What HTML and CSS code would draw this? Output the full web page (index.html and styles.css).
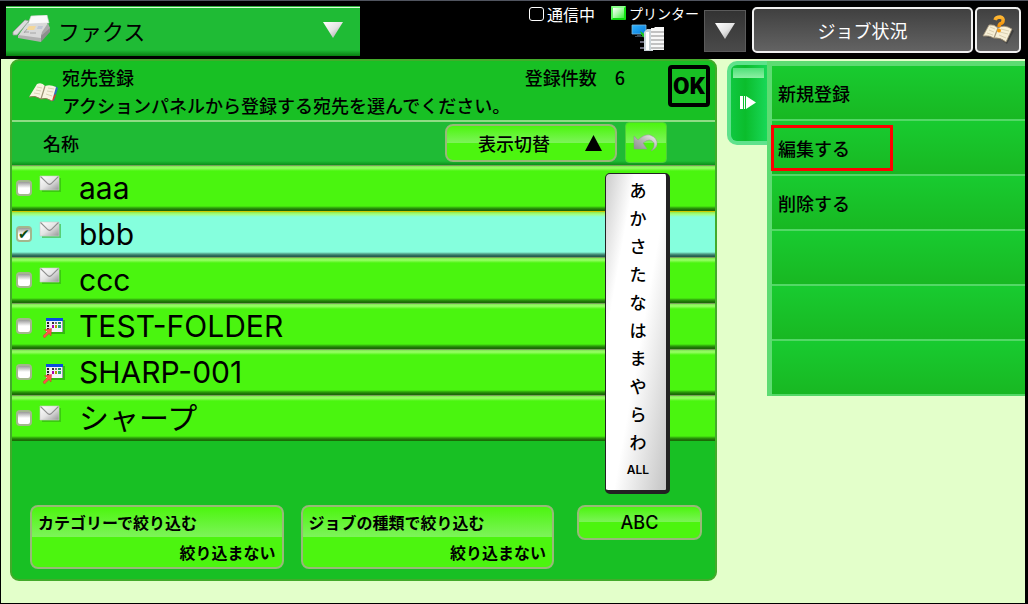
FILE: index.html
```html
<!DOCTYPE html>
<html lang="ja">
<head>
  <meta charset="UTF-8">
  <meta name="viewport" content="width=device-width, initial-scale=1">
  <title>宛先登録</title>
  <link rel="stylesheet" href="styles.css">
</head>
<body>

<!-- Shared icons -->
<svg class="defs" width="0" height="0" aria-hidden="true">
  <defs>
    <linearGradient id="silver" x1="0" y1="0" x2="1" y2="1">
      <stop offset="0" stop-color="#fff"/>
      <stop offset="0.5" stop-color="#e4e4e4"/>
      <stop offset="1" stop-color="#969696"/>
    </linearGradient>
    <linearGradient id="steel" x1="0" y1="1" x2="1" y2="0">
      <stop offset="0" stop-color="#8a8a8a"/>
      <stop offset="0.5" stop-color="#b4b4b4"/>
      <stop offset="1" stop-color="#f4f4f4"/>
    </linearGradient>
    <linearGradient id="screen" x1="0" y1="0" x2="1" y2="1">
      <stop offset="0" stop-color="#2fb4ff"/>
      <stop offset="1" stop-color="#0878d8"/>
    </linearGradient>
    <linearGradient id="amber" x1="0" y1="0" x2="0" y2="1">
      <stop offset="0" stop-color="#ffb733"/>
      <stop offset="1" stop-color="#f08a00"/>
    </linearGradient>
  </defs>
  <symbol id="mail" viewBox="0 0 26 20">
    <path d="M3 3h19v14H3z" fill="#2aa010" opacity="0.5"/>
    <path d="M1 1h19v14H1z" fill="url(#silver)" stroke="#c9c9c9" stroke-width="0.6"/>
    <path d="M1.5 1.5 9 8.8q1.500 1.200 3 0L19.500 1.500" fill="none" stroke="#8e8e8e" stroke-width="1.100"/>
  </symbol>
  <symbol id="folder" viewBox="0 0 24 24">
    <path d="M6 4h17v14H6z" fill="#1f8a10" opacity="0.55"/>
    <path d="M4 2h17v14H4z" fill="#f4f4fa"/>
    <path d="M4 2h17v3H4z" fill="#0a4be0"/>
    <path d="M4 5h4v11H4z" fill="#e8e8e8"/>
    <path d="M20 5h1v11h-1z" fill="#9a9ab0"/>
    <path d="M5 6h2v2H5zM5 9h2v2H5zM5 12h2v2H5z" fill="#222"/>
    <path d="M10 6h2v2h-2z" fill="#333"/>
    <path d="M13 6h2v2h-2z" fill="#777"/>
    <path d="M16 6h3v2h-3z" fill="#189060"/>
    <path d="M10 9h2v3h-2z" fill="#b000b0"/>
    <path d="M13 9h2v3h-2z" fill="#a8a800"/>
    <path d="M16 9h3v3h-3z" fill="#28a878"/>
    <path d="M1 20 5.500 15.500 2.500 13.800 9.500 12.500 9 20 7 17.500 2.500 22z" fill="#ff5548" stroke="#c93a30" stroke-width="0.5"/>
  </symbol>
</svg>

<!-- Top bar -->
<header class="topbar">
  <button class="mode" type="button">
    <svg width="40" height="30" viewBox="0 0 40 30" aria-hidden="true">
      <path d="M15 8 35 8 38 15 29 25 6 21z" fill="#d9d9d9"/>
      <path d="M19 1 35 0 37 8 16 9z" fill="#fafafa" stroke="#d2d2d2" stroke-width="0.6"/>
      <path d="M29 20 38 12V17L29 27z" fill="#8e8e8e"/>
      <path d="M36 8 38 13 29 21 30 17z" fill="#a9a9a9"/>
      <path d="M6 20 29 23V27L6 23z" fill="#b1b1b1"/>
      <path d="M13 5 17 6 5 20 1 20V17z" fill="#dcdcdc" stroke="#9a9a9a" stroke-width="0.8"/>
      <path d="M17 11h7l-2 4h-8z" fill="#f3d79b"/>
      <path d="M26 11h5l-1 3h-5z" fill="#c0c6d4"/>
      <path d="M12 17h5M18 18h6M15 14l-3 4" stroke="#a6a6a6" stroke-width="1" fill="none"/>
    </svg>
    <span>ファクス</span>
    <svg class="arrow" width="20" height="16" viewBox="0 0 20 16" aria-hidden="true"><path d="M0 0h20L10 16z" fill="url(#silver)"/></svg>
  </button>

  <div class="status">
    <div class="state"><span class="lamp"></span>通信中</div>
    <div class="printer">
      <div class="printer-name"><span class="lamp on"></span>プリンター</div>
      <svg width="34" height="28" viewBox="0 0 34 28" aria-hidden="true">
        <path d="M1 1h14v9H1z" fill="url(#screen)" stroke="#7fb9dc" stroke-width="0.8"/>
        <path d="M6 10h4v2H6zM4 12h9v1H4z" fill="#3c4a54"/>
        <path d="M9 7l6 4 1 5-5-4z" fill="#18c81c"/>
        <path d="M9 18h5v-2M9 24h5" stroke="#667" stroke-width="2" fill="none"/>
        <path d="M13 8l3-3h6v22h-9z" fill="#c9d3d8"/>
        <path d="M15 8h3v18h-3z" fill="#fff"/>
        <path d="M20 4h3l1-1h9v23H20z" fill="#f8f8f8"/>
        <path d="M20 8h13M20 12h13M20 16h13M20 20h13M20 24h13" stroke="#8b8b8b" stroke-width="1"/>
      </svg>
    </div>
  </div>

  <button class="drop" type="button" aria-label="メニュー">
    <svg width="20" height="16" viewBox="0 0 20 16" aria-hidden="true"><path d="M0 0h20L10 16z" fill="url(#silver)"/></svg>
  </button>
  <button class="job" type="button">ジョブ状況</button>
  <button class="help" type="button" aria-label="ヘルプ">
    <svg width="32" height="30" viewBox="0 0 32 30" aria-hidden="true">
      <path d="M4 23Q12 21 18 24L25 29 32 16 28 12z" fill="#2c2c2c" opacity="0.5"/>
      <path d="M7 10Q12 9 16 13Q22 9 30 14L24 27Q18 22 12 23Q7 20 1 21z" fill="#f7efd6" stroke="#a4957a" stroke-width="0.8"/>
      <path d="M16 13 12 23" stroke="#a4957a" stroke-width="1.200"/>
      <path d="M8 12l5 2M7 15l5 2M5 18l6 2M19 14l8 2M18 17l8 2M17 20l7 3" stroke="#d2c6a6" stroke-width="0.8"/>
      <path d="M13 5Q14 2 18 2Q22 3 21 6Q21 8 18 9Q17 10 17 12" fill="none" stroke="url(#amber)" stroke-width="3.500"/>
      <circle cx="17" cy="15.500" r="2" fill="#f59a10"/>
    </svg>
  </button>
</header>

<main class="screen">
  <!-- Address list -->
  <section class="panel">
    <div class="panel-head">
      <svg class="book" width="32" height="24" viewBox="0 0 32 24" aria-hidden="true">
        <path d="M27 5l3 2-4 13-3-1z" fill="#2d6fb8"/>
        <path d="M27 13l1 1-3 6-2-1z" fill="#d8431f"/>
        <path d="M9 3Q14 1 17 5Q22 3 28 6L24 20Q18 16 13 18Q7 14 1 16z" fill="#f8f3e0"/>
        <path d="M17 5 13 18" stroke="#9c9474" stroke-width="1.200"/>
        <path d="M9 6l5 1M8 9l5 1M6 12l6 1M20 7l6 1M19 10l6 1M18 13l6 2" stroke="#d3cba9" stroke-width="0.8"/>
        <path d="M1 16Q7 14 13 18Q18 16 24 20" fill="none" stroke="#8d7d50" stroke-width="1"/>
      </svg>
      <div class="panel-text">
        <div class="panel-title">
          <h1>宛先登録</h1>
          <span>登録件数　6</span>
        </div>
        <p>アクションパネルから登録する宛先を選んでください。</p>
      </div>
      <button class="ok" type="button">OK</button>
    </div>

    <div class="list-bar">
      <h2>名称</h2>
      <button class="glossy switch" type="button">
        <span>表示切替</span>
        <svg width="17" height="16" viewBox="0 0 17 16" aria-hidden="true"><path d="M8.500 0 17 16H0z"/></svg>
      </button>
      <button class="glossy undo" type="button" aria-label="戻る">
        <svg width="26" height="20" viewBox="0 0 26 20" aria-hidden="true">
          <path d="M1 3 5 7Q11 1 17 2Q25 5 24 12Q23 16 18 18Q22 14 21 10Q17 4 10 10L14 16H1z" fill="url(#steel)" stroke="#8a9a84" stroke-width="0.5"/>
        </svg>
      </button>
    </div>

    <div class="list-area">
      <ul class="list">
        <li><label class="row"><input type="checkbox"><svg class="mail" aria-hidden="true"><use href="#mail"/></svg><span>aaa</span></label></li>
        <li><label class="row selected"><input type="checkbox" checked><svg class="mail" aria-hidden="true"><use href="#mail"/></svg><span>bbb</span></label></li>
        <li><label class="row"><input type="checkbox"><svg class="mail" aria-hidden="true"><use href="#mail"/></svg><span>ccc</span></label></li>
        <li><label class="row"><input type="checkbox"><svg class="folder" aria-hidden="true"><use href="#folder"/></svg><span>TEST-FOLDER</span></label></li>
        <li><label class="row"><input type="checkbox"><svg class="folder" aria-hidden="true"><use href="#folder"/></svg><span>SHARP-001</span></label></li>
        <li><label class="row"><input type="checkbox"><svg class="mail" aria-hidden="true"><use href="#mail"/></svg><span>シャープ</span></label></li>
      </ul>

      <!-- Index floats over the rows -->
      <nav class="index" aria-label="索引">
        <button type="button">あ</button>
        <button type="button">か</button>
        <button type="button">さ</button>
        <button type="button">た</button>
        <button type="button">な</button>
        <button type="button">は</button>
        <button type="button">ま</button>
        <button type="button">や</button>
        <button type="button">ら</button>
        <button type="button">わ</button>
        <button class="all" type="button">ALL</button>
      </nav>
    </div>

    <div class="filters">
      <button class="glossy filter" type="button"><span>カテゴリーで絞り込む</span><span class="value">絞り込まない</span></button>
      <button class="glossy filter" type="button"><span>ジョブの種類で絞り込む</span><span class="value">絞り込まない</span></button>
      <button class="glossy abc" type="button">ABC</button>
    </div>
  </section>

  <!-- Action panel -->
  <button class="tab" type="button" aria-label="アクションパネルを閉じる">
    <svg width="16" height="14" viewBox="0 0 16 14" aria-hidden="true"><path d="M0 0h3v13H0zM4 0h1v13H4zM6 0l10 6.500L6 13z" fill="#fff"/></svg>
  </button>
  <aside class="actions">
    <ul>
      <li><button type="button">新規登録</button></li>
      <li><button class="marked" type="button">編集する</button></li>
      <li><button type="button">削除する</button></li>
      <li></li>
      <li></li>
      <li></li>
    </ul>
  </aside>
</main>

</body>
</html>
```
FILE: styles.css
```css
* {
  box-sizing: border-box;
}
body {
  margin: 0;
  min-height: 100vh;
  display: flex;
  flex-direction: column;
  background: #000;
  color: #000;
  font-family: "Noto Sans CJK JP", sans-serif;
  font-size: 18px;
  font-weight: 500;
}
h1, h2, p, ul {
  margin: 0;
  padding: 0;
  font-size: 18px;
  font-weight: 500;
}
ul {
  list-style: none;
}
button {
  margin: 0;
  padding: 0;
  border: 0;
  background: none;
  color: inherit;
  font: inherit;
  cursor: pointer;
}
svg {
  display: block;
  flex: none;
}
.defs {
  position: absolute;
}

/* Top bar */
.topbar {
  display: flex;
  align-items: flex-start;
  border-top: 1px solid #50545f;
  padding: 5px 7px 3px 6px;
  color: #fff;
  font-weight: 400;
}
.mode {
  flex: 0 1 354px;
  height: 50px;
  display: flex;
  align-items: center;
  padding: 0 17px 2px 6px;
  gap: 6px;
  color: #000;
  font-size: 22px;
  background: linear-gradient(#2fae3c 0, #2fae3c 1px, #d8ffd8 1px, #d8ffd8 2px, #1fbb35 2px, #1fbb35 44px, #087f10 50px);
}
.mode .arrow {
  margin-left: auto;
}
.status {
  display: flex;
  gap: 16px;
  margin-left: auto;
  margin-right: 5px;
  line-height: 16px;
}
.state, .printer-name {
  display: flex;
  align-items: center;
  gap: 3px;
  white-space: nowrap;
}
.state {
  align-self: flex-start;
  font-size: 16px;
}
.printer-name {
  font-size: 14px;
  line-height: 14px;
}
.printer svg {
  margin: 4px 0 0 20px;
}
.lamp {
  width: 15px;
  height: 14px;
  border: 1px solid #fff;
  border-radius: 3px;
}
.lamp.on {
  border: 2px solid;
  border-color: #8dff8d #12e412 #0cd80c #60f560;
  border-radius: 1px;
  background: linear-gradient(135deg, #fff, #a5f9a5 50%, #3ef03e);
}
.drop {
  width: 42px;
  height: 42px;
  margin: 4px 6px 0 0;
  display: flex;
  align-items: center;
  justify-content: center;
  border: 1px solid #5a5a5a;
  background: linear-gradient(#333, #4a4a4a);
}
.job, .help {
  height: 46px;
  margin-top: 1px;
  border: 2px solid #f0f0f0;
  border-radius: 5px;
  background: linear-gradient(#404040, #636363);
}
.job {
  width: 221px;
  margin-right: 2px;
}
.help {
  width: 46px;
  display: flex;
  align-items: center;
  justify-content: center;
}

/* Main area */
.screen {
  flex: 1;
  display: grid;
  grid-template-columns: 717fr 40px 258fr;
  align-items: start;
  padding-left: 9px;
  border: solid #000;
  border-width: 0 3px 1px 1px;
  background: #e3ffca;
}
.panel {
  margin-right: 10px;
  border: 2px solid #43ab2a;
  border-radius: 9px;
  background: #18c024;
}
.panel-head {
  display: flex;
  align-items: center;
  padding: 2px 5px 1px 16px;
  border-bottom: 2px solid #8fdc86;
}
.book {
  margin-top: 4px;
}
.panel-text {
  flex: 1;
  margin: 0 43px 0 2px;
  line-height: 28px;
  white-space: nowrap;
}
.panel-title {
  display: flex;
  justify-content: space-between;
}
.ok {
  width: 42px;
  height: 42px;
  align-self: flex-start;
  margin-top: 2px;
  border: 4px solid #000;
  border-radius: 4px;
  font-family: Roboto, sans-serif;
  font-size: 24px;
  font-weight: 900;
}
.list-bar {
  display: flex;
  align-items: center;
  height: 43px;
  padding: 0 48px 2px 31px;
  background: linear-gradient(#1fbb35 39px, #0c8f18);
}
.list-bar h2 {
  flex: 1;
}
.glossy {
  border: 2px solid #98b978;
  border-radius: 8px;
  background: linear-gradient(#4cf50f, #7df45a 50%, #4cf50f 50%);
}
.switch {
  width: 172px;
  height: 38px;
  display: flex;
  align-items: center;
  justify-content: space-between;
  padding: 0 13px 0 31px;
}
.undo {
  width: 42px;
  height: 41px;
  margin-left: 8px;
  display: flex;
  align-items: center;
  justify-content: center;
  border: 1px solid #4fcf38;
  border-radius: 4px;
}

/* Address rows */
.list-area {
  position: relative;
}
.row {
  display: flex;
  align-items: center;
  height: 46px;
  padding-left: 4px;
  font-family: Inter, "Noto Sans CJK JP", sans-serif;
  font-size: 30px;
  font-weight: 400;
  line-height: 40px;
  background: linear-gradient(#799f59 0, #799f59 1px, #7ce850 1px, #9aff68 3px, #4af50f 6px, #4af50f 41px, #2c9d0b 43px, #1b6a06 45px);
}
.row.selected {
  background: linear-gradient(#d0c800 0, #d0c800 1px, #8de84c 1px, #a4ff7a 3px, #85ffdd 6px, #85ffdd 41px, #4f9d85 43px, #236050 45px);
}
.row input {
  appearance: none;
  width: 16px;
  height: 16px;
  margin: 0 8px 0 0;
  border: 2px solid #a3b78d;
  border-radius: 4px;
  background: linear-gradient(#999, #fff 50%);
}
.row input:checked::after {
  content: "✔";
  display: block;
  color: #0b4a0b;
  font: bold 14px/12px "DejaVu Sans", sans-serif;
}
.mail {
  width: 26px;
  height: 20px;
  margin: -6px 14px 0 -1px;
}
.folder {
  width: 24px;
  height: 24px;
  margin: 4px 13px 0 2px;
}
.index {
  position: absolute;
  top: 8px;
  right: 45px;
  width: 65px;
  display: flex;
  flex-direction: column;
  padding: 2px 0 6px;
  border: solid #222;
  border-width: 1px 4px 4px 1px;
  border-radius: 5px;
  background: linear-gradient(100deg, #ccc, #fff 25%, #fff 55%, #c4c4c4);
}
.index button {
  height: 28px;
  padding-left: 4px;
  font-size: 17px;
  line-height: 28px;
}
.index .all {
  font-family: Inter, sans-serif;
  font-size: 12px;
  font-weight: 600;
}

/* Filter buttons */
.filters {
  display: flex;
  align-items: flex-start;
  gap: 17px;
  padding: 64px 13px 10px 18px;
}
.filter {
  flex: 1;
  height: 64px;
  display: flex;
  flex-direction: column;
  align-items: flex-start;
  padding: 0 6px;
  font-size: 16px;
  font-weight: 700;
  line-height: 30px;
  white-space: nowrap;
}
.value {
  align-self: flex-end;
}
.abc {
  width: 125px;
  height: 35px;
  margin-left: 6px;
  font-family: Inter, sans-serif;
  font-size: 18px;
}

/* Action panel */
.tab {
  height: 84px;
  margin-top: 2px;
  display: flex;
  align-items: center;
  padding-left: 9px;
  border: 4px solid #5fe28c;
  border-right: 0;
  border-radius: 10px 0 0 10px;
  background:
    linear-gradient(#4fe078, #8cf0a4) 2px 3px / 31px 10px no-repeat,
    linear-gradient(90deg, #0fc840, #0bbd2c 40%, #18d858);
}
.actions {
  margin-top: 2px;
  border: solid #5ddc72;
  border-width: 5px 0 0 5px;
}
.actions li {
  height: 55px;
  border-bottom: 2px solid #53d866;
  background: linear-gradient(#18cb30, #18b822);
}
.actions button {
  width: 100%;
  height: 53px;
  padding-left: 6px;
  text-align: left;
}
.actions .marked {
  width: 122px;
  height: 46px;
  margin: 4px 0 0 -1px;
  padding-left: 4px;
  border: 3px solid #f00;
}
```
